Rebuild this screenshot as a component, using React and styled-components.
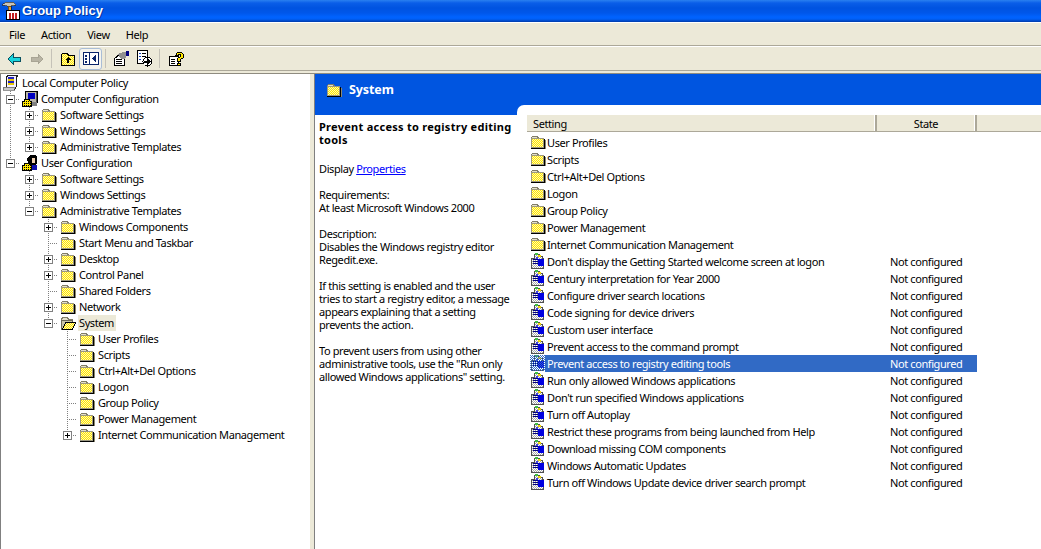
import React from 'react';
import styled, { createGlobalStyle } from 'styled-components';

const Global = createGlobalStyle`
  html, body { margin: 0; padding: 0; background: #ece9d8; }
  body { font-family: "Noto Sans", Tahoma, sans-serif; font-size: 11px; letter-spacing: -0.4px; color: #000; overflow: hidden; }
`;

const Win = styled.div`
  width: 1041px; height: 549px; overflow: hidden;
  display: flex; flex-direction: column; background: #ece9d8;
`;
const TitleBar = styled.div`
  height: 22px; flex: none; display: flex; align-items: center; gap: 2px; padding: 0 0 2px 2px; box-sizing: border-box;
  background: linear-gradient(to bottom, #2a80f0 0, #0a5ee8 3px, #0053e0 8px, #0057ea 13px, #0063ff 17px, #0060f8 19px, #0047c4 21px, #003aa8 22px);
`;
const TitleText = styled.span`
  font-family: "Liberation Sans", sans-serif; font-weight: 700; font-size: 13px; letter-spacing: 0; color: #fff;
  text-shadow: 1px 1px 0 #0036a0;
`;
const MenuBar = styled.div`
  height: 24px; flex: none; box-sizing: border-box; display: flex; align-items: center; padding: 0 0 0 1px;
  border-top: 1px solid #fff; border-bottom: 1px solid #aca899;
`;
const MenuItem = styled.span` padding: 0 8px; `;
const ToolBar = styled.div`
  height: 25px; flex: none; box-sizing: border-box; display: flex; align-items: center; padding: 0 0 0 2px;
  border-top: 1px solid #fff; border-bottom: 1px solid #aca899;
`;
const ToolButton = styled.div`
  width: 23px; height: 22px; display: flex; align-items: center; justify-content: center; box-sizing: border-box;
  border-radius: 3px;
  border: 1px solid ${p => (p.$active ? '#a9bdd6' : 'transparent')};
  background: ${p => (p.$active ? '#f5f4ee' : 'transparent')};
`;
const ToolSep = styled.div`
  width: 8px; height: 19px; box-sizing: border-box; padding-left: 3px;
  &::before { content: ""; display: block; width: 1px; height: 100%; background: #c5c2b8; }
`;
const Panes = styled.div`
  flex: 1; min-height: 0; display: flex; margin-top: 2px; border-top: 1px solid #8f8c80; background: #ece9d8;
`;
const TreePane = styled.div`
  width: 309px; flex: none; background: #fff; border-left: 1px solid #808080;
  padding-top: 1px; overflow: hidden;
`;
const Splitter = styled.div` width: 4px; flex: none; `;
const RightPane = styled.div`
  flex: 1; min-width: 0; display: flex; flex-direction: column; border-left: 1px solid #808080;
`;
const Banner = styled.div`
  height: 31px; flex: none; background: #0055e0; display: flex; align-items: center; padding: 0 0 0 11px; gap: 7px;
  box-sizing: border-box;
`;
const BannerTitle = styled.span` color: #fff; font-weight: 700; font-size: 12.5px; letter-spacing: -0.1px; `;
const Content = styled.div` flex: 1; min-height: 0; display: flex; background: #0055e0; `;
const Desc = styled.div`
  width: 202px; flex: none; margin-top: 10px; background: #fff; padding: 5px 0 0 4px; box-sizing: border-box;
  line-height: 13px; white-space: nowrap; overflow: hidden;
`;
const DescTitle = styled.div` font-weight: 700; letter-spacing: 0.27px; margin-bottom: 16px; `;
const DescBlock = styled.p` margin: 0 0 13px; `;
const PropLink = styled.span` color: #0000ff; text-decoration: underline; `;
const ListWrap = styled.div`
  flex: 1; min-width: 0; background: #fff; border-top-left-radius: 7px; padding: 10px 0 0 10px; box-sizing: border-box;
`;
const HeaderRow = styled.div`
  height: 16px; display: flex; background: #ece9d8; border-bottom: 1px solid #aca899;
`;
const HeaderCell = styled.div`
  width: ${p => p.$w}px; flex: ${p => (p.$w ? 'none' : 1)}; box-sizing: border-box; line-height: 17px;
  padding-left: ${p => (p.$center ? 0 : 6)}px; text-align: ${p => (p.$center ? 'center' : 'left')};
  border-right: ${p => (p.$w ? '2px solid #aca899' : 'none')};
  box-shadow: ${p => (p.$w ? 'inset -1px 0 0 #fff' : 'none')};
`;
const Rows = styled.div` padding-top: 2px; `;
const Row = styled.div`
  height: 17px; display: flex; align-items: flex-start; padding-left: 3px; white-space: nowrap;
`;
const RowBody = styled.div`
  display: flex; align-items: center; height: 17px; line-height: 17px; margin-left: -1px;
  background: ${p => (p.$sel ? '#316ac5' : 'transparent')};
  color: ${p => (p.$sel ? '#fff' : '#000')};
`;
const NameCell = styled.div` width: 330px; padding-left: 2px; box-sizing: border-box; `;
const StateCell = styled.div` width: 102px; padding-left: 15px; box-sizing: border-box; `;

const TreeRow = styled.div`
  height: 16px; display: flex; align-items: stretch; white-space: nowrap;
`;
const dots = 'repeating-linear-gradient(to bottom, #808080 0 1px, transparent 1px 2px)';
const dotsH = 'repeating-linear-gradient(to right, #808080 0 1px, transparent 1px 2px)';
const Guide = styled.div`
  width: 19px; flex: none; box-sizing: border-box; display: flex; align-items: center; padding-left: 5px;
  background-repeat: no-repeat;
  background-image: ${p => [p.$line ? dots : null, p.$stub ? dotsH : null].filter(Boolean).join(',') || 'none'};
  background-size: ${p => [p.$line ? `1px ${p.$half ? '8px' : '16px'}` : null, p.$stub ? '10px 1px' : null].filter(Boolean).join(',') || 'auto'};
  background-position: ${p => [p.$line ? '9px 0' : null, p.$stub ? '9px 8px' : null].filter(Boolean).join(',') || '0 0'};
`;
const Expander = styled.div`
  width: 9px; height: 9px; box-sizing: border-box; border: 1px solid #808080; background: #fff;
  display: flex; align-items: center; justify-content: center;
`;
const IconSlot = styled.div` margin-left: 2px; width: 16px; height: 16px; flex: none; `;
const TreeLabel = styled.span`
  margin-left: 2px; padding: 0 2px 0 1px; line-height: 16px; height: 16px;
  background: ${p => (p.$sel ? '#ece9d8' : 'transparent')};
`;

const Svg = ({ children, w = 16, h = 16 }) => (
  <svg width={w} height={h} viewBox={`0 0 ${w} ${h}`} shapeRendering="crispEdges" style={{ display: 'block', flex: 'none' }}>{children}</svg>
);
const Dither = () => (
  <pattern id="dith" width="2" height="2" patternUnits="userSpaceOnUse">
    <rect width="2" height="2" fill="#ffe600" />
    <rect width="1" height="1" fill="#fff8b0" />
    <rect x="1" y="1" width="1" height="1" fill="#fff8b0" />
  </pattern>
);
const Gray = () => (
  <pattern id="gdith" width="2" height="2" patternUnits="userSpaceOnUse">
    <rect width="2" height="2" fill="#ffffff" />
    <rect width="1" height="1" fill="#a8a8a8" />
    <rect x="1" y="1" width="1" height="1" fill="#a8a8a8" />
  </pattern>
);
const Folder = () => (
  <Svg>
    <Dither />
    <path d="M1.5 4.5v-1l1-1h5l1 2h5v1h-12z" fill="#e4e0c8" stroke="#807c68" />
    <rect x="1" y="4" width="13" height="10" fill="url(#dith)" />
    <path d="M1.5 4.5h12v9h-12z" fill="none" stroke="#9c9880" />
    <rect x="1" y="14" width="14" height="1" fill="#000" />
    <rect x="14" y="5" width="1" height="10" fill="#000" />
    <rect x="15" y="6" width="1" height="9" fill="#8c8870" />
  </Svg>
);
const OpenFolder = () => (
  <Svg>
    <Dither />
    <path d="M1.5 4.5l1-2h5l1 2h4v3h-11z" fill="#e4e0c8" stroke="#807c68" />
    <path d="M1.5 14.5v-9h11v2h3l-3 7z" fill="#c8c4a8" stroke="#6c6858" />
    <path d="M2.5 14.5l3-7h10l-3 7z" fill="url(#dith)" stroke="#000" />
  </Svg>
);
const ScrollIcon = () => (
  <Svg>
    <path d="M4.5 0.5h10l-1 2v9l-2 3h-9l1-3v-9z" fill="#f4f0ff" stroke="#202020" />
    <rect x="5" y="2" width="6" height="2" fill="#2020c0" />
    <rect x="5" y="4" width="6" height="2" fill="#e8c800" />
    <rect x="5" y="6" width="6" height="2" fill="#2020c0" />
    <rect x="5" y="8" width="6" height="2" fill="#e8c800" />
    <rect x="0" y="12" width="11" height="3" fill="#c8c8c8" stroke="#303030" strokeWidth="0.5" />
  </Svg>
);
const Gear = () => (
  <g>
    <pattern id="gold" width="2" height="2" patternUnits="userSpaceOnUse">
      <rect width="2" height="2" fill="#ffe800" />
      <rect width="1" height="1" fill="#000" />
    </pattern>
    <path d="M0 11l2-1 1-2 2 1 2-1 1 2 2 1-1 2 1 2-2 1-1-1-2 1-2-1-1 1-2-1 1-2z" fill="url(#gold)" stroke="#000" />
  </g>
);
const ComputerIcon = () => (
  <Svg>
    <rect x="3.5" y="0.5" width="12" height="11" fill="#b8b4a8" stroke="#000" />
    <rect x="6" y="2" width="7" height="6" fill="#0000c0" />
    <rect x="14" y="1" width="1" height="10" fill="#505050" />
    <rect x="9" y="11" width="6" height="4" fill="#808080" />
    <Gear />
  </Svg>
);
const UserIcon = () => (
  <Svg>
    <path d="M5 3l3-3h5l2 2v6l-1 3H8L6 8z" fill="#000" />
    <rect x="10" y="3" width="3" height="5" fill="#f0d0b0" />
    <rect x="9" y="10" width="6" height="5" fill="#1010b0" />
    <Gear />
  </Svg>
);
const PolicyIcon = ({ selected }) => (
  <Svg>
    <Gray />
    <defs>
      <pattern id="seld" width="2" height="2" patternUnits="userSpaceOnUse">
        <rect width="1" height="1" fill="#316ac5" />
        <rect x="1" y="1" width="1" height="1" fill="#316ac5" />
      </pattern>
    </defs>
    <path d="M4.5 1.5h5v2h3v2h1v10h-12v-10h3z" fill="url(#gdith)" stroke="#505050" />
    <rect x="5" y="0" width="3" height="2" fill="#40c040" />
    <rect x="8" y="2" width="3" height="2" fill="#f0d800" />
    <rect x="6" y="4" width="2" height="2" fill="#4040e0" />
    <rect x="3" y="6" width="5" height="1" fill="#000080" />
    <rect x="3" y="8" width="5" height="1" fill="#000080" />
    <rect x="3" y="10" width="5" height="1" fill="#000080" />
    <rect x="8" y="6" width="6" height="7" fill="#0000e0" />
    {selected && <rect width="16" height="16" fill="url(#seld)" />}
  </Svg>
);
const BackArrow = () => (
  <Svg w={14} h={12}>
    <path d="M1 6l5-5v3h7v4H6v3z" fill="#19d3dc" stroke="#0a5060" />
  </Svg>
);
const ForwardArrow = () => (
  <Svg w={14} h={12}>
    <path d="M13 6L8 1v3H1v4h7v3z" fill="#b8b4a4" stroke="#a8a494" />
  </Svg>
);
const UpFolder = () => (
  <Svg>
    <Dither />
    <path d="M1.5 3.5l1-1h5l1 2h6v10h-13z" fill="url(#dith)" stroke="#000" />
    <path d="M8 6l3 3H9v3H7V9H5z" fill="#000" />
  </Svg>
);
const PaneToggle = () => (
  <Svg w={16} h={13}>
    <rect x="0.5" y="0.5" width="15" height="12" fill="#fff" stroke="#0a246a" />
    <rect x="6" y="1" width="1" height="11" fill="#0a246a" />
    <rect x="2" y="3" width="2" height="2" fill="#0a246a" />
    <rect x="2" y="6" width="2" height="2" fill="#0a246a" />
    <rect x="2" y="9" width="2" height="2" fill="#0a246a" />
    <path d="M13 3v7L9 6.5z" fill="#0a246a" />
  </Svg>
);
const PropsIcon = () => (
  <Svg w={17} h={16}>
    <path d="M1.5 7.5l5-4h5v11h-10z" fill="#fff" stroke="#000" />
    <rect x="3" y="8" width="6" height="1" fill="#000" />
    <rect x="3" y="10" width="6" height="1" fill="#000" />
    <rect x="3" y="12" width="6" height="1" fill="#000" />
    <path d="M5 3l5-2h3v5l-2 2H8z" fill="#909090" />
    <rect x="13" y="0" width="3" height="5" fill="#000080" />
  </Svg>
);
const ExportIcon = () => (
  <Svg w={17} h={17}>
    <rect x="1.5" y="0.5" width="10" height="13" fill="#fff" stroke="#000" />
    <rect x="3" y="3" width="2" height="1" fill="#1040c0" />
    <rect x="6" y="3" width="4" height="1" fill="#000" />
    <rect x="3" y="6" width="2" height="1" fill="#1040c0" />
    <rect x="6" y="6" width="4" height="1" fill="#000" />
    <rect x="3" y="9" width="2" height="1" fill="#1040c0" />
    <circle cx="11.5" cy="11.5" r="4.5" fill="#fff" stroke="#000" />
    <path d="M8 10.5h3V8l4 3.5-4 3.5v-2.5H8z" fill="#000" />
  </Svg>
);
const HelpIcon = () => (
  <Svg w={16} h={16}>
    <path d="M1.5 5.5h9v9h-9z" fill="#fff" stroke="#000" />
    <rect x="3" y="8" width="4" height="1" fill="#000" />
    <rect x="3" y="10" width="4" height="1" fill="#000" />
    <rect x="3" y="12" width="4" height="1" fill="#000" />
    <path d="M7.5 4.5l2-3h4l2 2v3l-3 2v2h-3v-3l3-2v-2h-2l-1 2z" fill="#ffe800" stroke="#000" />
    <rect x="9.5" y="12.5" width="3" height="2" fill="#ffe800" stroke="#000" />
  </Svg>
);
const Hammer = () => (
  <Svg w={18} h={19}>
    <path d="M0 4l4-3h7l3 3-5 1-2 1-2-1z" fill="#c8c4b8" stroke="#303030" strokeWidth="0.7" />
    <rect x="6" y="5" width="3" height="9" fill="#e8a030" stroke="#000" strokeWidth="0.5" />
    <rect x="4.5" y="9.5" width="13" height="9" fill="#fff" stroke="#000" />
    <rect x="7" y="12" width="2" height="6" fill="#c02020" />
    <rect x="10" y="12" width="2" height="6" fill="#c02020" />
    <rect x="13" y="12" width="2" height="6" fill="#c02020" />
  </Svg>
);
const Sign = ({ open }) => (
  <Svg w={7} h={7}>
    <rect x="1" y="3" width="5" height="1" fill="#000" />
    {!open && <rect x="3" y="1" width="1" height="5" fill="#000" />}
  </Svg>
);

const f = (label, o = {}) => ({ label, icon: 'folder', ...o });
const tree = f('Local Computer Policy', {
  icon: 'scroll',
  children: [
    f('Computer Configuration', {
      icon: 'computer', open: true,
      children: [f('Software Settings', { closed: 1 }), f('Windows Settings', { closed: 1 }), f('Administrative Templates', { closed: 1 })],
    }),
    f('User Configuration', {
      icon: 'user', open: true,
      children: [
        f('Software Settings', { closed: 1 }),
        f('Windows Settings', { closed: 1 }),
        f('Administrative Templates', {
          open: true,
          children: [
            f('Windows Components', { closed: 1 }),
            f('Start Menu and Taskbar'),
            f('Desktop', { closed: 1 }),
            f('Control Panel', { closed: 1 }),
            f('Shared Folders'),
            f('Network', { closed: 1 }),
            f('System', {
              open: true, selected: true, icon: 'openFolder',
              children: [
                f('User Profiles'), f('Scripts'), f('Ctrl+Alt+Del Options'), f('Logon'), f('Group Policy'), f('Power Management'),
                f('Internet Communication Management', { closed: 1 }),
              ],
            }),
          ],
        }),
      ],
    }),
  ],
});

const treeIcons = { folder: Folder, openFolder: OpenFolder, scroll: ScrollIcon, computer: ComputerIcon, user: UserIcon };

function flatten(node, guides, isLast, out) {
  out.push({ node, guides, isLast });
  (node.children || []).forEach((c, i, arr) => {
    const next = node === tree ? [] : [...guides, !isLast];
    flatten(c, next, i === arr.length - 1, out);
  });
  return out;
}
const treeRows = flatten(tree, [], true, []);

const TreeItem = ({ node, guides, isLast }) => {
  const Icon = treeIcons[node.icon];
  const root = node === tree;
  return (
    <TreeRow>
      {guides.map((on, i) => <Guide key={i} $line={on} />)}
      {!root && (
        <Guide $line $half={isLast} $stub>
          {(node.closed || node.open) && (
            <Expander><Sign open={node.open} /></Expander>
          )}
        </Guide>
      )}
      <IconSlot><Icon /></IconSlot>
      <TreeLabel $sel={node.selected}>{node.label}</TreeLabel>
    </TreeRow>
  );
};

const folders = ['User Profiles', 'Scripts', 'Ctrl+Alt+Del Options', 'Logon', 'Group Policy', 'Power Management', 'Internet Communication Management'];
const policies = [
  "Don't display the Getting Started welcome screen at logon",
  'Century interpretation for Year 2000',
  'Configure driver search locations',
  'Code signing for device drivers',
  'Custom user interface',
  'Prevent access to the command prompt',
  'Prevent access to registry editing tools',
  'Run only allowed Windows applications',
  "Don't run specified Windows applications",
  'Turn off Autoplay',
  'Restrict these programs from being launched from Help',
  'Download missing COM components',
  'Windows Automatic Updates',
  'Turn off Windows Update device driver search prompt',
];

export default function App() {
  return (
    <Win>
      <Global />
      <TitleBar><Hammer /><TitleText>Group Policy</TitleText></TitleBar>
      <MenuBar>
        {['File', 'Action', 'View', 'Help'].map(m => <MenuItem key={m}>{m}</MenuItem>)}
      </MenuBar>
      <ToolBar>
        <ToolButton><BackArrow /></ToolButton>
        <ToolButton><ForwardArrow /></ToolButton>
        <ToolSep />
        <ToolButton><UpFolder /></ToolButton>
        <ToolButton $active><PaneToggle /></ToolButton>
        <ToolSep />
        <ToolButton><PropsIcon /></ToolButton>
        <ToolButton><ExportIcon /></ToolButton>
        <ToolSep />
        <ToolButton><HelpIcon /></ToolButton>
      </ToolBar>
      <Panes>
        <TreePane>
          {treeRows.map((r, i) => <TreeItem key={i} {...r} />)}
        </TreePane>
        <Splitter />
        <RightPane>
          <Banner><Folder /><BannerTitle>System</BannerTitle></Banner>
          <Content>
            <Desc>
              <DescTitle>Prevent access to registry editing<br />tools</DescTitle>
              <DescBlock>Display <PropLink>Properties</PropLink></DescBlock>
              <DescBlock>Requirements:<br />At least Microsoft Windows 2000</DescBlock>
              <DescBlock>Description:<br />Disables the Windows registry editor<br />Regedit.exe.</DescBlock>
              <DescBlock>If this setting is enabled and the user<br />tries to start a registry editor, a message<br />appears explaining that a setting<br />prevents the action.</DescBlock>
              <DescBlock>To prevent users from using other<br />administrative tools, use the "Run only<br />allowed Windows applications" setting.</DescBlock>
            </Desc>
            <ListWrap>
              <HeaderRow>
                <HeaderCell $w={350}>Setting</HeaderCell>
                <HeaderCell $w={100} $center>State</HeaderCell>
                <HeaderCell />
              </HeaderRow>
              <Rows>
                {folders.map(n => (
                  <Row key={n}>
                    <Folder />
                    <RowBody><NameCell>{n}</NameCell></RowBody>
                  </Row>
                ))}
                {policies.map((n, i) => (
                  <Row key={n}>
                    <PolicyIcon selected={i === 6} />
                    <RowBody $sel={i === 6}>
                      <NameCell>{n}</NameCell>
                      <StateCell>Not configured</StateCell>
                    </RowBody>
                  </Row>
                ))}
              </Rows>
            </ListWrap>
          </Content>
        </RightPane>
      </Panes>
    </Win>
  );
}
